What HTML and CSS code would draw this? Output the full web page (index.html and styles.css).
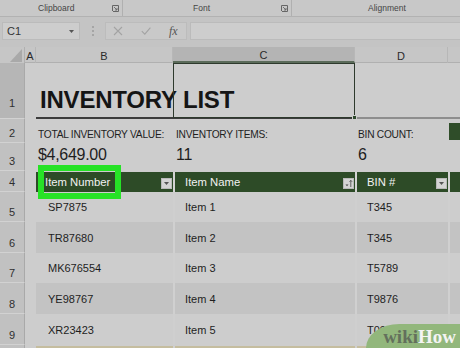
FILE: index.html
```html
<!DOCTYPE html>
<html>
<head>
<meta charset="utf-8">
<link rel="stylesheet" href="styles.css">
</head>
<body>
<div class="ribbon">
  <div class="rgroup g1"><span class="rlabel">Clipboard</span><svg class="launch" viewBox="0 0 7 7"><path d="M0.5 6V0.5H6.5V6.5H1" fill="none" stroke="#666" stroke-width="1"/><path d="M2 2L5 5M5 3V5H3" fill="none" stroke="#666" stroke-width="0.9"/></svg></div>
  <div class="rgroup g2"><span class="rlabel">Font</span><svg class="launch" viewBox="0 0 7 7"><path d="M0.5 6V0.5H6.5V6.5H1" fill="none" stroke="#666" stroke-width="1"/><path d="M2 2L5 5M5 3V5H3" fill="none" stroke="#666" stroke-width="0.9"/></svg></div>
  <div class="rgroup g3"><span class="rlabel">Alignment</span></div>
</div>
<div class="fbar">
  <div class="namebox"><span>C1</span><svg class="caret" viewBox="0 0 5 3"><path d="M0 0H5L2.5 3Z" fill="#555"/></svg></div>
  <div class="dots"><i></i><i></i><i></i></div>
  <div class="fbtns">
    <svg class="ic" viewBox="0 0 10 10"><path d="M1 1L9 9M9 1L1 9" stroke="#a3a3a3" stroke-width="1.1" fill="none"/></svg>
    <svg class="ic" viewBox="0 0 10 10"><path d="M0.8 5.2L3.8 8.2L9.4 1.6" stroke="#a3a3a3" stroke-width="1.1" fill="none"/></svg>
    <span class="fx">fx</span>
  </div>
  <div class="finput"></div>
</div>
<div class="sheet">
  <div class="row hh">
    <div class="corner"><svg viewBox="0 0 12 13"><path d="M12 0V13H0Z" fill="#a9a9a9"/></svg></div>
    <div class="ch">A</div>
    <div class="ch">B</div>
    <div class="ch chsel">C</div>
    <div class="ch">D</div>
    <div class="ch che"></div>
  </div>
  <div class="row h1">
    <div class="rh rhsel r1n">1</div>
    <div class="ca t1a"></div>
    <div class="title">INVENTORY LIST</div>
    <div class="t1d"></div>
    <div class="t1e"></div>
    <div class="selbox"><i class="handle"></i></div>
  </div>
  <div class="row h2">
    <div class="rh">2</div>
    <div class="ca"></div>
    <div class="lab">TOTAL INVENTORY VALUE:</div>
    <div class="lab">INVENTORY ITEMS:</div>
    <div class="lab">BIN COUNT:</div>
    <div class="e2"><i class="gblock"></i></div>
  </div>
  <div class="row h3">
    <div class="rh">3</div>
    <div class="ca"></div>
    <div class="val">$4,649.00</div>
    <div class="val">11</div>
    <div class="val">6</div>
    <div></div>
  </div>
  <div class="row h4">
    <div class="rh">4</div>
    <div class="ca"></div>
    <div class="th first">Item Number<span class="dd"><svg viewBox="0 0 5 3"><path d="M0 0H5L2.5 3Z" fill="#555"/></svg></span><span class="hl"></span></div>
    <div class="th">Item Name<span class="dd"><svg viewBox="0 0 9 9"><path d="M1.5 5.5H4.5L3 7.2Z" fill="#444"/><path d="M6.8 8V1.5M5.5 2.8L6.8 1.3L8.1 2.8" stroke="#444" stroke-width="0.8" fill="none"/></svg></span></div>
    <div class="th">BIN #<span class="dd"><svg viewBox="0 0 5 3"><path d="M0 0H5L2.5 3Z" fill="#555"/></svg></span></div>
    <div class="th the"></div>
  </div>
  <div class="row hr">
    <div class="rh">5</div><div class="ca"></div>
    <div class="td first">SP7875</div><div class="td">Item 1</div><div class="td">T345</div><div class="td"></div>
  </div>
  <div class="row hr2 band">
    <div class="rh">6</div><div class="ca"></div>
    <div class="td first">TR87680</div><div class="td">Item 2</div><div class="td">T345</div><div class="td"></div>
  </div>
  <div class="row hr">
    <div class="rh">7</div><div class="ca"></div>
    <div class="td first">MK676554</div><div class="td">Item 3</div><div class="td">T5789</div><div class="td"></div>
  </div>
  <div class="row hr2 band">
    <div class="rh">8</div><div class="ca"></div>
    <div class="td first">YE98767</div><div class="td">Item 4</div><div class="td">T9876</div><div class="td"></div>
  </div>
  <div class="row hr2">
    <div class="rh">9</div><div class="ca"></div>
    <div class="td first">XR23423</div><div class="td">Item 5</div><div class="td">T098</div><div class="td"></div>
  </div>
  <div class="row h10">
    <div class="rh"></div><div class="ca"></div>
    <div class="tan first"></div><div class="tan"></div><div class="tan"></div><div class="tan"></div>
  </div>
</div>
<div class="wh"><span class="wiki">wiki</span><span class="how">How</span></div>
</body>
</html>
```
FILE: styles.css
```css
*{box-sizing:border-box;margin:0;padding:0}
html,body{width:460px;height:348px;overflow:hidden}
body{background:#c4c4c4;font-family:"Liberation Sans",Arial,sans-serif;color:#222;position:relative}

.ribbon{display:flex;height:17px;border-bottom:1px solid #b2b2b2;background:#c8c8c8}
.rgroup{display:flex;align-items:center;height:16px;border-right:1px solid #b0b0b0}
.g1{width:123px;padding-left:38px}
.g2{width:169px;padding-left:70px}
.g3{flex:1;padding-left:76px;border-right:0}
.rlabel{font-size:8.5px;color:#454545}
.launch{width:7px;height:7px;margin-left:auto;margin-right:3px;margin-top:1px}

.fbar{display:flex;align-items:flex-start;height:30px;padding:5px 0 0 2px}
.namebox{width:78px;height:18px;background:#cdcdcd;border:1px solid #bbbbbb;display:flex;align-items:center;justify-content:space-between;padding:0 5px 0 4px;font-size:11px;color:#333}
.caret{width:5px;height:3px}
.dots{width:25px;height:18px;display:flex;flex-direction:column;align-items:center;justify-content:center;gap:2px}
.dots i{width:2px;height:2px;background:#a5a5a5;display:block}
.fbtns{width:82px;height:18px;background:#c9c9c9;border:1px solid #bcbcbc;display:flex;align-items:center;padding-left:7px}
.ic{width:10px;height:10px;margin-right:18px}
.fx{font-family:"Liberation Serif",serif;font-style:italic;font-size:12px;color:#555;margin-left:0}
.finput{flex:1;margin-left:3px;height:18px;background:#cdcdcd;border:1px solid #bbbbbb;border-right:0}

.sheet{background:#cdcdcd}
.row{display:grid;grid-template-columns:25px 11px 137px 182px 93px 1fr}
.hh{height:16px;background:#c6c6c6;border-bottom:1px solid #b0b0b0}
.h1{height:56px}
.h2{height:24px}
.h3{height:28px}
.h4{height:21px}
.hr{height:30px}
.hr2{height:31px}
.h10{height:20px}

.corner{background:#c6c6c6;border-right:1px solid #b0b0b0;display:flex;align-items:flex-end;justify-content:flex-end;padding:0 2px 1px 0}
.corner svg{width:12px;height:13px}
.ch{font-size:11px;color:#2a2a2a;display:flex;align-items:center;justify-content:center;border-right:1px solid #b7b7b7;padding-top:1px}
.chsel{background:#b4b4b4;border-bottom:2px solid #5b6b5a;padding-top:2px}
.che{border-right:0}

.rh{background:#c1c1c1;border-right:1px solid #a9a9a9;border-bottom:1px solid #d2d2d2;font-size:11px;color:#2f2f2f;display:flex;align-items:flex-end;justify-content:center;padding-bottom:3px}
.rhsel{background:#b6b6b6}
.r1n{padding-bottom:9px}

.h1 > *{grid-row:1}
.t1a{grid-column:2}
.title{grid-column:3/5;font-weight:bold;font-size:24px;color:#151515;letter-spacing:-0.2px;display:flex;align-items:flex-end;padding:0 0 3px 4px;border-bottom:2px solid #3c3c3c;white-space:nowrap;overflow:hidden}
.t1d{grid-column:5;border-bottom:2px solid #8e8e8e}
.t1e{grid-column:6;border-bottom:2px solid #8e8e8e}
.selbox{grid-column:4;border:1px solid #2e3a2d;border-bottom:1px solid #2e3a2d;position:relative;margin-bottom:1px}
.handle{position:absolute;right:-3px;bottom:-3px;width:5px;height:5px;background:#2e4a2c;border:1px solid #cdcdcd;display:block}

.lab{font-size:10.2px;color:#1e1e1e;letter-spacing:-0.25px;display:flex;align-items:flex-end;padding:0 0 3px 2px;white-space:nowrap}
.lab:nth-child(4),.lab:nth-child(5){padding-left:3px}
.e2{padding:4px 0 3px 1px}
.gblock{display:block;height:17px;background:#2f4d29}
.val{font-size:16px;color:#1e1e1e;letter-spacing:-0.3px;padding:3px 0 0 2px}
.val:nth-child(4),.val:nth-child(5){padding-left:3px}

.th{background:#2d4b27;color:#f2f2f2;font-size:11.3px;display:flex;align-items:center;padding-left:10px;border-left:2px solid #d3d3d3;position:relative;margin-top:1px}
.th.first{border-left:0;padding-left:9px}
.the{padding:0}
.dd{position:absolute;right:1px;top:6px;width:11px;height:11px;background:#d4d4d4;border:1px solid #b9b9b9;display:flex;align-items:center;justify-content:center}
.dd svg{width:5px;height:3px}
.th:nth-child(4) .dd svg{width:9px;height:9px}
.hl{position:absolute;left:2px;top:-7px;width:83px;height:34px;border:6px solid #26e226}

.td{font-size:11px;color:#1e1e1e;display:flex;align-items:center;padding-left:10px;border-left:2px solid #cfcfcf}
.td.first{border-left:0;padding-left:12px}
.band .td{background:#c3c3c3;border-left-color:#d0d0d0}
.band .td.first{border-left:0}
.tan{background:#c5bd9f;border-left:2px solid #d0d0d0;margin-top:1px}
.tan.first{border-left:0}

.wh{position:absolute;right:0;bottom:0;width:94px;height:24px;background:#92b77c;border-top-left-radius:36px 26px;display:flex;align-items:flex-end;justify-content:flex-end;padding:0 4px 0 0;font-family:"Liberation Serif",serif;font-weight:bold;font-size:19px;line-height:22px}
.wiki{color:#63705c}
.how{color:#f4f4f4}
```
